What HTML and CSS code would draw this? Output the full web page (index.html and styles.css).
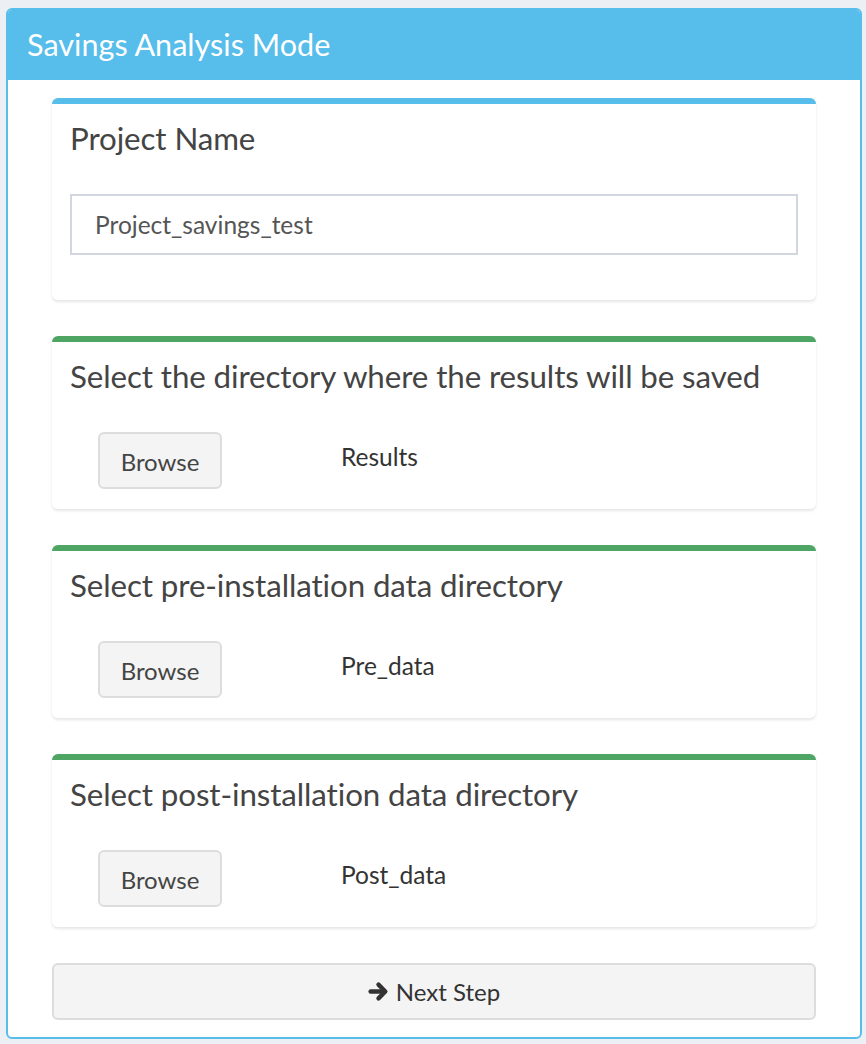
FILE: index.html
```html
<!DOCTYPE html>
<html>
<head>
<meta charset="utf-8">
<link rel="stylesheet" href="styles.css">
</head>
<body>
<div class="panel">
  <div class="panel-header"><h1 class="panel-title">Savings Analysis Mode</h1></div>
  <div class="panel-body">
    <div class="box box-info">
      <h3 class="box-title">Project Name</h3>
      <div class="box-body-input">
        <input class="text-input" type="text" value="Project_savings_test">
      </div>
    </div>
    <div class="box box-success">
      <h3 class="box-title">Select the directory where the results will be saved</h3>
      <div class="dir-row">
        <button class="btn btn-browse">Browse</button>
        <span class="dir-label">Results</span>
      </div>
    </div>
    <div class="box box-success">
      <h3 class="box-title">Select pre-installation data directory</h3>
      <div class="dir-row">
        <button class="btn btn-browse">Browse</button>
        <span class="dir-label">Pre_data</span>
      </div>
    </div>
    <div class="box box-success">
      <h3 class="box-title">Select post-installation data directory</h3>
      <div class="dir-row">
        <button class="btn btn-browse">Browse</button>
        <span class="dir-label">Post_data</span>
      </div>
    </div>
    <button class="btn btn-next">
      <svg class="arrow" viewBox="0 0 20 20" width="21" height="21" aria-hidden="true">
        <path d="M2.5 10 H15" stroke="#333" stroke-width="4.2" stroke-linecap="round" fill="none"/>
        <path d="M10 3.5 L16.5 10 L10 16.5" stroke="#333" stroke-width="4.2" stroke-linecap="round" stroke-linejoin="round" fill="none"/>
      </svg>
      <span>Next Step</span>
    </button>
  </div>
</div>
</body>
</html>
```

FILE: styles.css
```css
* { box-sizing: border-box; }
html, body {
  margin: 0;
  padding: 0;
  background: #ecf0f5;
  font-family: Lato, "Open Sans", sans-serif;
}
.panel {
  margin: 8px 0 0 6px;
  width: 856px;
  border: 2px solid #57bdeb;
  border-radius: 6px;
  background: #fff;
  overflow: hidden;
}
.panel-header {
  background: #57bdeb;
  display: flex;
  align-items: center;
  padding-left: 19px;
  margin-top: -2px;
  padding-top: 1px;
  height: 72px;
}
.panel-title {
  margin: 0;
  font-size: 30.6px;
  font-weight: 400;
  color: #fff;
  line-height: 40px;
}
.panel-body {
  padding: 18px 44px 17px 44px;
}
.box {
  background: #fff;
  border-top: 6px solid #57bdeb;
  border-radius: 6px;
  box-shadow: 0 2px 3px rgba(0,0,0,0.10);
  margin-bottom: 36px;
  padding: 14px 18px 19px 18px;
  height: 173px;
}
.box-info { border-top-color: #57bdeb; height: 202px; }
.box-success { border-top-color: #4ea564; }
.box-title {
  margin: 0;
  font-size: 31.3px;
  line-height: 40px;
  font-weight: 400;
  color: #444;
  white-space: nowrap;
  letter-spacing: -0.1px;
}
.box-body-input { margin-top: 36px; }
.text-input {
  display: block;
  width: 100%;
  height: 61px;
  border: 2px solid #d2d6de;
  border-radius: 0;
  padding: 0 23px;
  font-family: inherit;
  font-size: 24.5px;
  color: #555;
  background: #fff;
  outline: none;
}
.dir-row {
  margin-top: 36px;
  display: flex;
  align-items: center;
  padding-left: 28px;
}
.btn {
  font-family: inherit;
  background: #f4f4f4;
  border: 2px solid #ddd;
  border-radius: 6px;
  color: #444;
  font-size: 24px;
  cursor: pointer;
}
.btn-browse {
  width: 124px;
  height: 57px;
  padding: 3px 0 0 0;
  line-height: 1;
}
.dir-label {
  margin-left: 119px;
  font-size: 24.5px;
  color: #333;
  margin-top: -8px;
}
.btn-next {
  width: 100%;
  height: 57px;
  display: flex;
  align-items: center;
  justify-content: center;
  gap: 7px;
  color: #333;
  padding: 0;
}
.arrow { display: block; }
```
